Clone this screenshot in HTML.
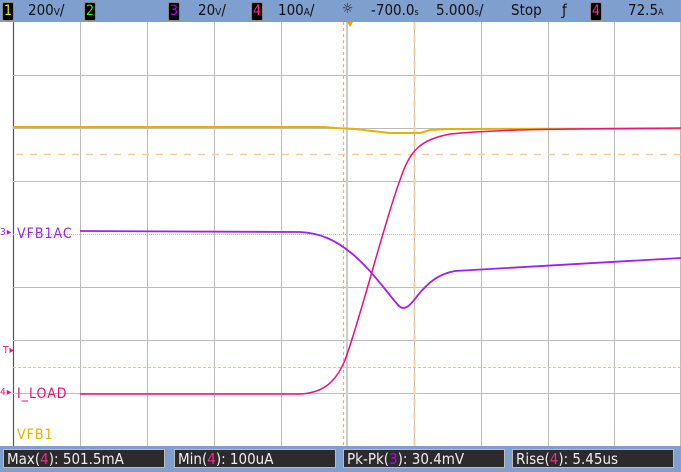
<!DOCTYPE html><html><head><style>
body{margin:0;width:681px;height:472px;overflow:hidden;background:#fff;font-family:"DejaVu Sans Condensed","Liberation Sans",sans-serif;position:relative}
.top{position:absolute;left:0;top:0;width:681px;height:22px;background:#7f9fcf;font-size:15px;color:#111}
.t{position:absolute;top:1px;white-space:nowrap}
.n{position:absolute;top:2px;width:10px;height:17px;background:#000;border:1px solid #888;border-radius:2px;font-size:14px;text-align:center;line-height:17px}
.bot{position:absolute;left:0;top:446px;width:681px;height:26px;background:#7f9fcf}
.m{position:absolute;top:3px;height:19px;background:#2b2b2b;border:1px solid #bbb;color:#eee;font-size:15px;line-height:19px;padding-left:3px;box-sizing:border-box;width:162px}
.lbl{position:absolute;font-size:14px;letter-spacing:1px}
</style></head><body>
<div class="top">
<div class="n" style="left:2px;color:#ee0">1</div><div class="t" style="left:28px">200<span style="font-size:10px">V</span>/</div>
<div class="n" style="left:84px;color:#2e2">2</div>
<div class="n" style="left:168px;color:#b0f">3</div><div class="t" style="left:198px">20<span style="font-size:10px">V</span>/</div>
<div class="n" style="left:251px;color:#f28">4</div><div class="t" style="left:278px">100<span style="font-size:10px">A</span>/</div>
<div class="t" style="left:342px;font-size:14px">☼</div>
<div class="t" style="left:371px">-700.0<span style="font-size:9px">s</span></div>
<div class="t" style="left:436px">5.000<span style="font-size:9px">s</span>/</div>
<div class="t" style="left:511px">Stop</div>
<div class="t" style="left:562px">ƒ</div>
<div class="n" style="left:590px;color:#f28">4</div>
<div class="t" style="left:628px">72.5<span style="font-size:9px">A</span></div>
</div>
<svg style="position:absolute;left:0;top:22px" width="681" height="424" viewBox="0 22 681 424">
<line x1="13.5" y1="22" x2="13.5" y2="446" stroke="#555" stroke-width="1.2"/>
<g stroke="#bbb" stroke-width="1">
<line x1="80.5" y1="22" x2="80.5" y2="446"/><line x1="147.5" y1="22" x2="147.5" y2="446"/><line x1="214.5" y1="22" x2="214.5" y2="446"/><line x1="281.5" y1="22" x2="281.5" y2="446"/><line x1="414.5" y1="22" x2="414.5" y2="446"/><line x1="481.5" y1="22" x2="481.5" y2="446"/><line x1="548.5" y1="22" x2="548.5" y2="446"/><line x1="614.5" y1="22" x2="614.5" y2="446"/><line x1="680.5" y1="22" x2="680.5" y2="446"/>
<line x1="13" y1="75.5" x2="681" y2="75.5"/><line x1="13" y1="128.5" x2="681" y2="128.5"/><line x1="13" y1="181.5" x2="681" y2="181.5"/><line x1="13" y1="287.5" x2="681" y2="287.5"/><line x1="13" y1="340.5" x2="681" y2="340.5"/><line x1="13" y1="393.5" x2="681" y2="393.5"/>
<line x1="13" y1="234.5" x2="681" y2="234.5" stroke-dasharray="1 1"/>
</g>
<line x1="347" y1="22" x2="347" y2="446" stroke="#ccc" stroke-width="2"/>
<line x1="343.5" y1="22" x2="343.5" y2="446" stroke="#fa5" stroke-width="1.2" stroke-dasharray="3 3"/>
<line x1="414.5" y1="22" x2="414.5" y2="446" stroke="#fc9" stroke-width="2" stroke-dasharray="8 5"/>
<line x1="16" y1="154.5" x2="681" y2="154.5" stroke="#fc9" stroke-width="1.5" stroke-dasharray="7 7"/>
<line x1="13" y1="367.5" x2="681" y2="367.5" stroke="#fb7" stroke-width="1" stroke-dasharray="3 2"/>
<polyline fill="none" stroke="#e8b000" stroke-width="2" points="13,127 325,127 335,128 355,129 372,131 390,133 420,133 430,130 450,129 681,128.5"/>
<path fill="none" stroke="#ee1177" stroke-width="1.5" d="M80,394 L300,394 C320,393 335,385 345,360 C360,320 385,220 400,180 C410,150 420,140 450,134 C500,129 560,129 681,128"/>
<path fill="none" stroke="#a020f0" stroke-width="1.8" d="M80,231 L300,232 C320,233 335,240 350,252 C370,268 385,290 398,305 C404,312 410,306 418,295 C428,283 438,274 455,271 C500,268 560,265 681,258"/>
<polygon points="347,22 353,22 350,27" fill="#f90"/>
</svg>
<div class="lbl" style="left:17px;top:226px;color:#a020f0">VFB1AC</div>
<div class="lbl" style="left:0;top:227px;color:#a020f0;font-size:10px">3▸</div>
<div class="lbl" style="left:17px;top:386px;color:#ee1177">I_LOAD</div>
<div class="lbl" style="left:0;top:387px;color:#ee1177;font-size:10px">4▸</div>
<div class="lbl" style="left:3px;top:345px;color:#ee1177;font-size:10px">T▸</div>
<div class="lbl" style="left:17px;top:427px;color:#e8b000">VFB1</div>
<div class="bot">
<div class="m" style="left:3px">Max(<span style="color:#f28">4</span>): 501.5mA</div>
<div class="m" style="left:174px">Min(<span style="color:#f28">4</span>): 100uA</div>
<div class="m" style="left:343px">Pk-Pk(<span style="color:#b0f">3</span>): 30.4mV</div>
<div class="m" style="left:512px">Rise(<span style="color:#f28">4</span>): 5.45us</div>
</div>
</body></html>
